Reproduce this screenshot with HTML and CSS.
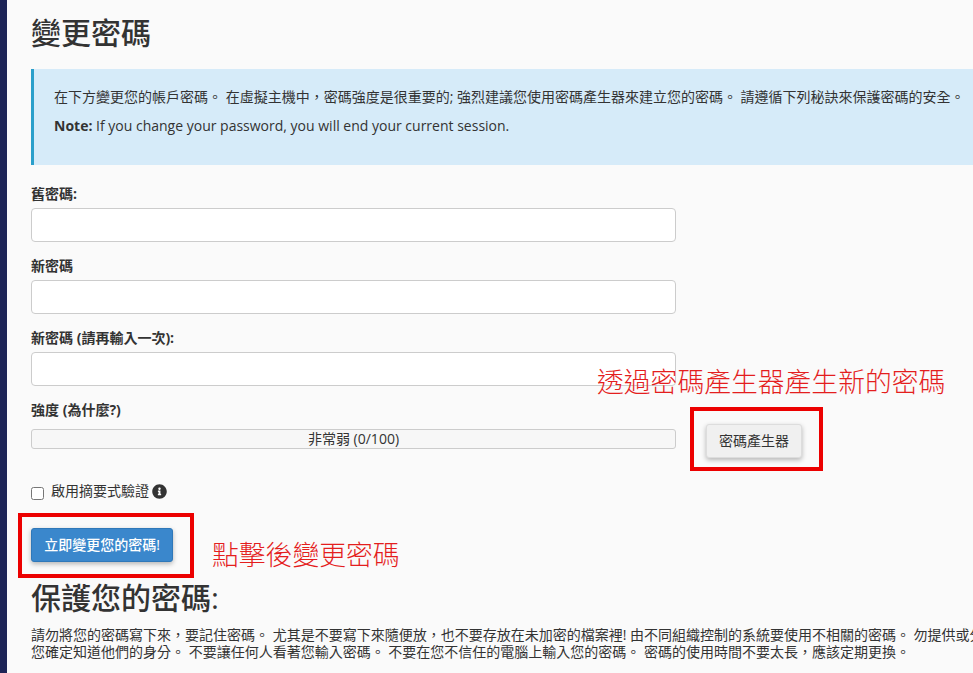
FILE: index.html
```html
<!DOCTYPE html>
<html lang="zh-Hant">
<head>
<meta charset="utf-8">
<title>變更密碼</title>
<link rel="stylesheet" href="styles.css">
</head>
<body>
<div class="shell">
  <aside class="rail"></aside>
  <main class="content">
    <h1 class="title">變更密碼</h1>
    <section class="alert">
      <p class="alert-line">在下方變更您的帳戶密碼。 在虛擬主機中，密碼強度是很重要的; 強烈建議您使用密碼產生器來建立您的密碼。 請遵循下列秘訣來保護密碼的安全。</p>
      <p class="alert-line alert-note"><strong>Note:</strong> If you change your password, you will end your current session.</p>
    </section>
    <form class="form">
      <div class="field">
        <label class="label" for="old">舊密碼:</label>
        <input class="input" id="old" type="password">
      </div>
      <div class="field">
        <label class="label" for="new">新密碼</label>
        <input class="input" id="new" type="password">
      </div>
      <div class="field">
        <label class="label" for="again">新密碼 (請再輸入一次):</label>
        <input class="input" id="again" type="password">
      </div>
      <div class="label">強度 (為什麼?)</div>
      <div class="strength">
        <div class="meter">非常弱 (0/100)</div>
        <button class="btn btn-default" type="button">密碼產生器</button>
      </div>
      <div class="check-row">
        <input class="check" id="digest" type="checkbox">
        <label class="check-label" for="digest">啟用摘要式驗證</label>
        <svg class="info" viewBox="0 0 512 512" aria-hidden="true"><path d="M256 8C119.043 8 8 119.083 8 256c0 136.997 111.043 248 248 248s248-111.003 248-248C504 119.083 392.957 8 256 8zm0 110c23.196 0 42 18.804 42 42s-18.804 42-42 42-42-18.804-42-42 18.804-42 42-42zm56 254c0 6.627-5.373 12-12 12h-88c-6.627 0-12-5.373-12-12v-24c0-6.627 5.373-12 12-12h12v-64h-12c-6.627 0-12-5.373-12-12v-24c0-6.627 5.373-12 12-12h64c6.627 0 12 5.373 12 12v100h12c6.627 0 12 5.373 12 12v24z"/></svg>
      </div>
      <button class="btn btn-primary" type="button">立即變更您的密碼!</button>
    </form>
    <h2 class="subtitle">保護您的密碼:</h2>
    <p class="tips">請勿將您的密碼寫下來，要記住密碼。 尤其是不要寫下來隨便放，也不要存放在未加密的檔案裡! 由不同組織控制的系統要使用不相關的密碼。 勿提供或分享您的密碼給任何人，除非<br>您確定知道他們的身分。 不要讓任何人看著您輸入密碼。 不要在您不信任的電腦上輸入您的密碼。 密碼的使用時間不要太長，應該定期更換。</p>
  </main>
</div>
<div class="mark mark-generator"></div>
<div class="mark mark-submit"></div>
<div class="note note-generator">透過密碼產生器產生新的密碼</div>
<div class="note note-submit">點擊後變更密碼</div>
</body>
</html>
```
FILE: styles.css
```css
html, body {
  margin: 0;
  height: 673px;
  overflow: hidden;
  background: #fafafa;
}
body {
  position: relative;
  color: #333;
  font-family: "Open Sans", "Noto Sans CJK TC", sans-serif;
  font-size: 14px;
}
.shell {
  display: flex;
  height: 673px;
}
.rail {
  flex: 0 0 7px;
  background: #1d2456;
}
.content {
  flex: 0 0 1200px;
  padding-left: 24px;
}
.title {
  margin: 10px 0 13px;
  font-size: 30px;
  line-height: 46px;
  font-weight: 500;
}
.alert {
  height: 96px;
  box-sizing: border-box;
  padding: 18px 0 0 20px;
  background: #d6ebf9;
  border-left: 3px solid #2a9fcb;
}
.alert-line {
  margin: 0;
  line-height: 20px;
  white-space: nowrap;
}
.alert-note {
  margin-top: 9px;
}
.form {
  margin-top: 19px;
}
.field {
  margin-bottom: 14px;
}
.label {
  display: block;
  height: 20px;
  margin-bottom: 4px;
  font-size: 14px;
  line-height: 20px;
  font-weight: 700;
}
.input {
  display: block;
  width: 645px;
  height: 34px;
  box-sizing: border-box;
  background: #fff;
  border: 1px solid #ccc;
  border-radius: 4px;
}
.strength {
  display: flex;
  align-items: flex-start;
  gap: 30px;
}
.meter {
  width: 645px;
  height: 20px;
  margin-top: 5px;
  box-sizing: border-box;
  background: #f7f7f7;
  border: 1px solid #ccc;
  border-radius: 3px;
  text-align: center;
  font-size: 14px;
  line-height: 18px;
}
.btn {
  height: 34px;
  box-sizing: border-box;
  padding: 0;
  border-radius: 3px;
  font-family: inherit;
  font-size: 14px;
  line-height: 32px;
}
.btn-default {
  width: 96px;
  color: #333;
  background: #f0f0f0;
  border: 1px solid #ddd;
  box-shadow: 0 2px 5px rgba(0, 0, 0, 0.28);
}
.btn-primary {
  display: block;
  width: 142px;
  margin-top: 27px;
  color: #fff;
  font-weight: 500;
  background: #3a87cc;
  border: 1px solid #2f78b9;
  box-shadow: 0 2px 5px rgba(0, 0, 0, 0.28);
}
.check-row {
  display: flex;
  align-items: center;
  height: 20px;
  margin-top: 23px;
}
.check {
  width: 13px;
  height: 13px;
  margin: 4px 7px 0 0;
}
.check-label {
  line-height: 20px;
  font-size: 14px;
}
.info {
  width: 15px;
  height: 15px;
  margin-left: 3px;
  fill: #333;
}
.subtitle {
  margin: 16px 0 8px;
  font-size: 30px;
  line-height: 40px;
  font-weight: 500;
}
.tips {
  margin: 0;
  font-size: 14px;
  line-height: 17px;
  white-space: nowrap;
}
.mark {
  position: absolute;
  box-sizing: border-box;
  border: 4px solid #ec0000;
}
.mark-generator {
  left: 690px;
  top: 407px;
  width: 133px;
  height: 64px;
}
.mark-submit {
  left: 18px;
  top: 513px;
  width: 176px;
  height: 65px;
}
.note {
  position: absolute;
  color: #e41e1e;
  font-family: "Noto Sans CJK TC", sans-serif;
  font-size: 26.8px;
  font-weight: 300;
  line-height: 36px;
  white-space: nowrap;
}
.note-generator {
  left: 597px;
  top: 363px;
}
.note-submit {
  left: 212px;
  top: 536px;
}
```
